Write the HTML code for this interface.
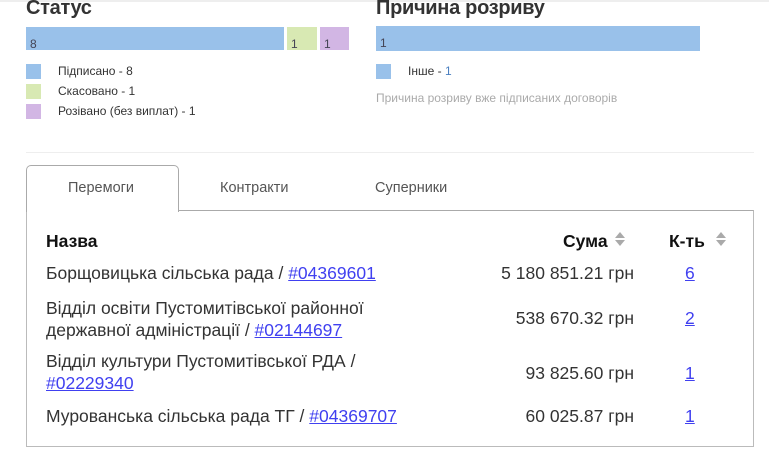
<!DOCTYPE html>
<html><head><meta charset="utf-8"><style>
*{margin:0;padding:0;box-sizing:border-box}
body{width:769px;height:461px;background:#fff;font-family:"Liberation Sans",sans-serif;color:#222;position:relative;overflow:hidden}
h2{position:absolute;font-size:20px;font-weight:bold;color:#333;letter-spacing:-0.3px}
.bar{position:absolute;height:23px;font-size:12px;padding:10px 0 0 4px;color:#445}
.sq{position:absolute;width:15px;height:15px}
.lg{position:absolute;font-size:12px;color:#333}
.t{position:absolute;font-size:17.5px;color:#333;white-space:nowrap}
a{color:#4040f0;text-decoration:underline}
.tab{position:absolute;font-size:14.5px;color:#555}
.arr{position:absolute;width:0;height:0;border-left:5px solid transparent;border-right:5px solid transparent}
</style></head><body>
<div style="position:absolute;left:0;top:0;width:769px;height:2px;background:#eee"></div>
<h2 style="left:26px;top:-3px">Статус</h2>
<div class="bar" style="left:26px;top:27px;width:258px;background:#99c1ea">8</div>
<div class="bar" style="left:287px;top:27px;width:30px;background:#d8e9b3">1</div>
<div class="bar" style="left:320px;top:27px;width:29px;background:#d2b6e4">1</div>
<div class="sq" style="left:26px;top:64px;background:#99c1ea"></div>
<div class="sq" style="left:26px;top:84px;background:#d8e9b3"></div>
<div class="sq" style="left:26px;top:104px;background:#d2b6e4"></div>
<div class="lg" style="left:58px;top:64px">Підписано - 8</div>
<div class="lg" style="left:58px;top:84px">Скасовано - 1</div>
<div class="lg" style="left:58px;top:104px">Розівано (без виплат) - 1</div>

<h2 style="left:376px;top:-3px">Причина розриву</h2>
<div class="bar" style="left:376px;top:26px;width:324px;height:25px;background:#99c1ea">1</div>
<div class="sq" style="left:376px;top:64px;background:#99c1ea"></div>
<div class="lg" style="left:408px;top:64px">Інше - <span style="color:#4a7fc0">1</span></div>
<div class="lg" style="left:376px;top:91px;color:#aaa">Причина розриву вже підписаних договорів</div>

<div style="position:absolute;left:26px;top:152px;width:728px;height:1px;background:#eee"></div>

<div style="position:absolute;left:26px;top:210px;width:728px;height:237px;border:1px solid #bbb;border-top:1px solid #aaa"></div>
<div style="position:absolute;left:26px;top:165px;width:153px;height:47px;border:1px solid #aaa;border-bottom:none;border-radius:5px 5px 0 0;background:#fff"></div>
<div class="tab" style="left:68px;top:180px">Перемоги</div>
<div class="tab" style="left:220px;top:180px">Контракти</div>
<div class="tab" style="left:375px;top:180px">Суперники</div>

<div class="t" style="left:46px;top:231px;font-weight:bold;color:#111">Назва</div>
<div class="t" style="left:563px;top:231px;font-weight:bold;color:#111">Сума</div>
<div class="arr" style="left:615px;top:232px;border-bottom:6px solid #aaa"></div>
<div class="arr" style="left:615px;top:240px;border-top:6px solid #aaa"></div>
<div class="t" style="left:669px;top:231px;font-weight:bold;color:#111">К-ть</div>
<div class="arr" style="left:716px;top:232px;border-bottom:6px solid #aaa"></div>
<div class="arr" style="left:716px;top:240px;border-top:6px solid #aaa"></div>

<div class="t" style="left:46px;top:263px">Борщовицька сільська рада / <a>#04369601</a></div>
<div class="t" style="right:135px;top:263px">5 180 851.21 грн</div>
<div class="t" style="left:685px;top:263px"><a>6</a></div>

<div class="t" style="left:46px;top:297px;line-height:22px">Відділ освіти Пустомитівської районної<br>державної адміністрації / <a>#02144697</a></div>
<div class="t" style="right:135px;top:308px">538 670.32 грн</div>
<div class="t" style="left:685px;top:308px"><a>2</a></div>

<div class="t" style="left:46px;top:350px;line-height:22px">Відділ культури Пустомитівської РДА /<br><a>#02229340</a></div>
<div class="t" style="right:135px;top:363px">93 825.60 грн</div>
<div class="t" style="left:685px;top:363px"><a>1</a></div>

<div class="t" style="left:46px;top:406px">Мурованська сільська рада ТГ / <a>#04369707</a></div>
<div class="t" style="right:135px;top:406px">60 025.87 грн</div>
<div class="t" style="left:685px;top:406px"><a>1</a></div>
</body></html>
